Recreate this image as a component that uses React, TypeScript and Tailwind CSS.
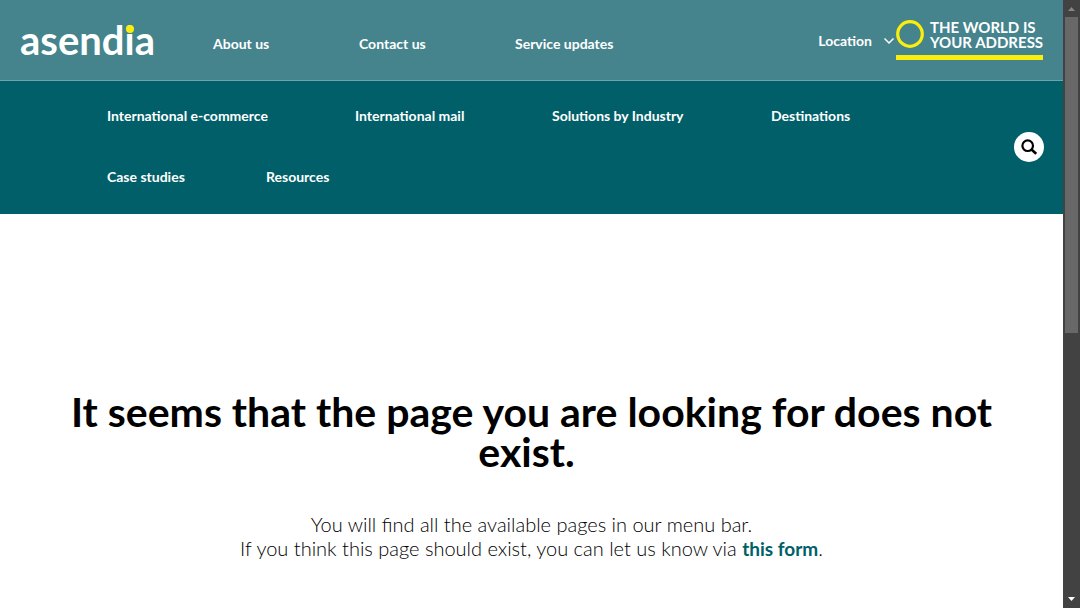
import React from "react";

const topLinks = [
  { label: "About us", width: "w-[146px]" },
  { label: "Contact us", width: "w-[156px]" },
  { label: "Service updates", width: "w-[110px]" },
];

const menuRows = [
  [
    { label: "International e-commerce", width: "w-[248px]" },
    { label: "International mail", width: "w-[197px]" },
    { label: "Solutions by Industry", width: "w-[219px]" },
    { label: "Destinations", width: "w-[90px]" },
  ],
  [
    { label: "Case studies", width: "w-[159px]" },
    { label: "Resources", width: "w-[90px]" },
  ],
];

function Logo() {
  return (
    <a href="#home" aria-label="asendia" className="text-[40px] leading-[40px] font-bold text-white">
      asend
      <span className="relative">
        i
        <span className="absolute top-[9px] left-px size-2 rounded-full bg-[#fcee0c]" />
      </span>
      a
    </a>
  );
}

function Tagline() {
  return (
    <div className="flex w-[147px] flex-col gap-[5px]">
      <div className="flex items-start justify-between">
        <svg viewBox="0 0 28 28" className="size-7" aria-hidden="true">
          <circle cx="14" cy="14" r="12.3" fill="none" stroke="#fcee0c" strokeWidth="3.2" />
        </svg>
        <p className="w-[113px] text-[15px] leading-[15px] font-bold whitespace-nowrap text-white">
          THE WORLD IS
          <br />
          YOUR ADDRESS
        </p>
      </div>
      <div className="h-[5px] bg-[#fcee0c]" />
    </div>
  );
}

function TopBar() {
  return (
    <div className="flex h-[81px] items-center border-b border-[#6fa3aa] bg-[#45848d] pr-5 pl-5">
      <div className="w-[193px]">
        <Logo />
      </div>
      <nav aria-label="Company" className="mt-2 flex flex-1 whitespace-nowrap">
        {topLinks.map((l) => (
          <a key={l.label} href="#link" className={l.width}>
            {l.label}
          </a>
        ))}
      </nav>
      <button type="button" className="mt-0.5 flex items-center gap-3">
        Location
        <svg viewBox="0 0 12 8" className="h-2 w-3" fill="none" stroke="white" strokeWidth="1.5" aria-hidden="true">
          <path d="M.5 1.500 5 6l4.500-4.500" />
        </svg>
      </button>
      <Tagline />
    </div>
  );
}

function MenuBar() {
  return (
    <div className="flex h-[133px] items-center justify-between bg-[#005f69] pr-[19px] pb-0.5 pl-[107px]">
      <nav aria-label="Main" className="flex flex-col gap-[41px] whitespace-nowrap">
        {menuRows.map((row, i) => (
          <div key={i} className="flex">
            {row.map((l) => (
              <a key={l.label} href="#link" className={l.width}>
                {l.label}
              </a>
            ))}
          </div>
        ))}
      </nav>
      <button type="button" aria-label="Search" className="flex size-[30px] items-center justify-center rounded-full bg-white">
        <svg viewBox="0 0 16 16" className="size-4" fill="none" stroke="black" strokeWidth="2.200" aria-hidden="true">
          <circle cx="6.700" cy="6.700" r="5.300" />
          <path d="m10 10 5.200 4.800" strokeWidth="2.600" />
        </svg>
      </button>
    </div>
  );
}

function ScrollRail() {
  return (
    <div aria-hidden="true" className="flex w-[17px] shrink-0 flex-col items-center bg-[#424242]">
      <svg viewBox="0 0 17 17" className="size-[17px]">
        <path d="M5 11h7L8.500 7z" fill="#868686" />
      </svg>
      <div className="flex w-full flex-1 justify-center">
        <div className="h-[55%] w-[13px] bg-[#686868]" />
      </div>
      <svg viewBox="0 0 17 17" className="size-[17px]">
        <path d="M5 6h7l-3.500 4z" fill="white" />
      </svg>
    </div>
  );
}

export default function App() {
  return (
    <div className="flex min-h-screen bg-white font-['Lato',sans-serif]">
      <div className="min-w-0 flex-1">
        <header className="text-[14px] leading-5 font-bold text-white">
          <TopBar />
          <MenuBar />
        </header>
        <main className="px-[60px] pt-[178px] text-center text-black">
          <h1 className="text-[41px] leading-10 font-bold">
            It seems that the page you are looking for does not exist.&nbsp;
          </h1>
          <p className="mt-10 text-[20px] leading-6 font-light">
            You will find all the available pages in our menu bar.
            <br />
            If you think this page should exist, you can let us know via{" "}
            <a href="#form" className="text-[19px] font-bold text-[#005f69]">
              this form
            </a>
            .
          </p>
        </main>
      </div>
      <ScrollRail />
    </div>
  );
}
